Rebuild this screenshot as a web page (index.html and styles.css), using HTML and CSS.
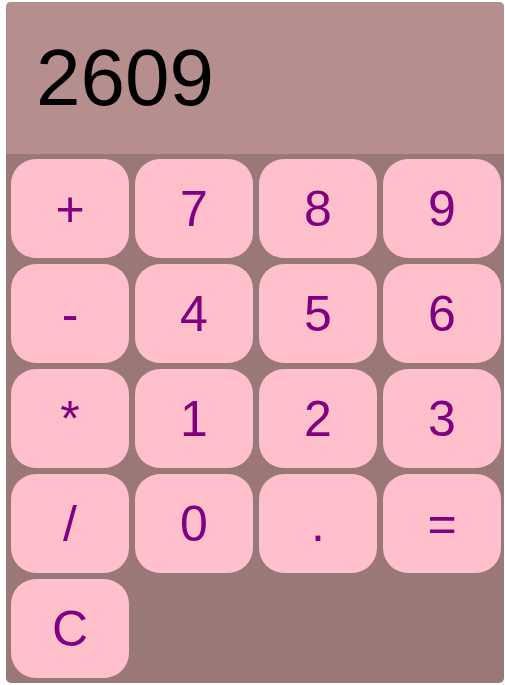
FILE: index.html
```html
<!DOCTYPE html>
<html>
<head>
<meta charset="utf-8">
<link rel="stylesheet" href="styles.css">
</head>
<body>
<div class="calc">
  <div class="display">2609</div>
  <div class="keys">
    <button class="key">+</button>
    <button class="key">7</button>
    <button class="key">8</button>
    <button class="key">9</button>
    <button class="key">-</button>
    <button class="key">4</button>
    <button class="key">5</button>
    <button class="key">6</button>
    <button class="key">*</button>
    <button class="key">1</button>
    <button class="key">2</button>
    <button class="key">3</button>
    <button class="key">/</button>
    <button class="key">0</button>
    <button class="key">.</button>
    <button class="key">=</button>
    <button class="key">C</button>
  </div>
</div>
</body>
</html>
```
FILE: styles.css
```css
html, body {
  margin: 0;
  padding: 0;
  background: #ffffff;
}
body {
  padding: 2px 1px 0 6px;
  font-family: "Liberation Sans", Arial, sans-serif;
}
.calc {
  width: 498px;
  border-radius: 5px;
  overflow: hidden;
  background: #9a7878;
}
.display {
  height: 152px;
  background: #b58e8d;
  display: flex;
  align-items: center;
  padding-left: 30px;
  font-size: 80px;
  color: #000;
  box-sizing: border-box;
}
.keys {
  display: grid;
  grid-template-columns: repeat(4, 118px);
  grid-auto-rows: 99px;
  gap: 6px;
  padding: 5px;
}
.key {
  border: none;
  border-radius: 25px;
  background: #ffc0cb;
  color: #800080;
  font-family: "Liberation Sans", Arial, sans-serif;
  font-size: 50px;
  padding: 0;
  margin: 0;
}
```
